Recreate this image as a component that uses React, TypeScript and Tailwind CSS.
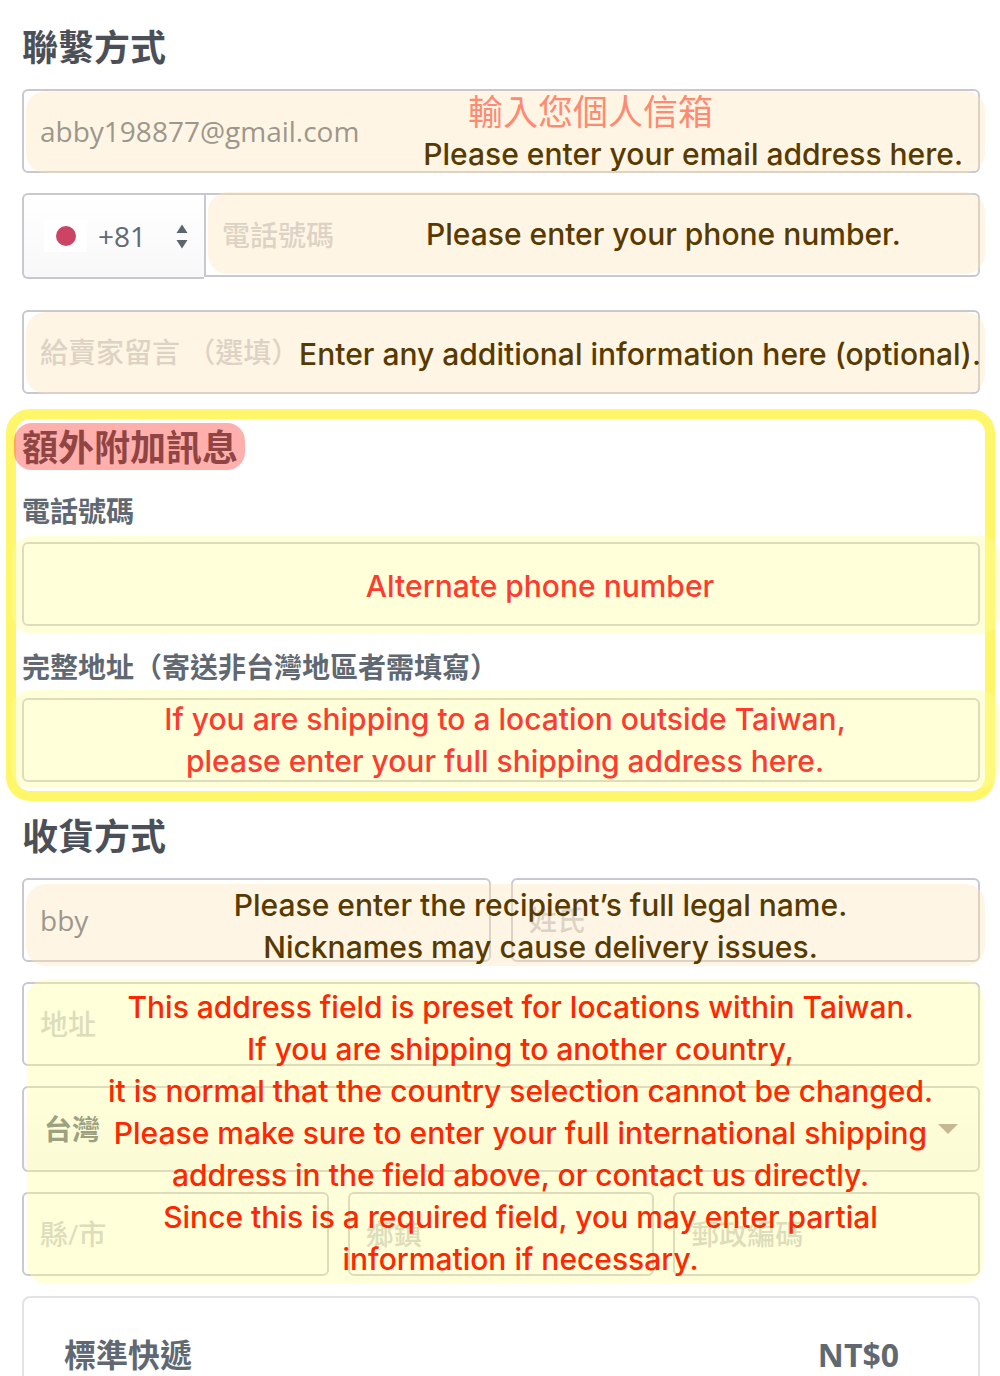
import type { InputHTMLAttributes, ReactNode } from "react";
import clsx from "clsx";

const fieldStyle =
  "block w-full h-[84px] rounded-md border-2 border-[#c8c8ce] bg-white px-4 text-[28px] text-[#606872] placeholder:font-medium placeholder:text-[#c8c8ce] placeholder:opacity-100 outline-none";

function Field({ className, ...props }: InputHTMLAttributes<HTMLInputElement>) {
  return <input className={clsx(fieldStyle, className)} {...props} />;
}

// Translucent marker laid over one or more form fields
function Note({
  tone,
  className,
  children,
}: {
  tone: "orange" | "yellow";
  className: string;
  children: ReactNode;
}) {
  return (
    <div
      className={clsx(
        "pointer-events-none absolute z-10 flex flex-col justify-center rounded-[20px] pt-[2px] font-['Inter','Noto_Sans_CJK_TC',sans-serif] text-[30px] leading-[42px] font-medium whitespace-nowrap",
        tone === "orange"
          ? "bg-[rgba(255,229,184,0.38)] text-[#573a00]"
          : "bg-[rgba(255,255,158,0.38)] text-[#ff3b30]",
        className
      )}
    >
      {children}
    </div>
  );
}

export default function App() {
  return (
    <main className="bg-white pl-[22px] pr-5 pt-[21px] font-['Open_Sans','Noto_Sans_CJK_TC',sans-serif] text-[#606872]">
      {/* Contact */}
      <section>
        <h2 className="mb-[14px] text-[36px] leading-[54px] font-bold text-[#4b5058]">
          聯繫方式
        </h2>
        <div className="relative">
          <Field type="email" aria-label="Email" defaultValue="abby198877@gmail.com" />
          <Note tone="orange" className="top-[2px] bottom-0 left-1 -right-[5px] pr-[22px]">
            <p className="pr-[250px] text-right text-[35px] font-normal text-[#ff8a72]">
              輸入您個人信箱
            </p>
            <p className="text-right">Please enter your email address here.</p>
          </Note>
        </div>

        <div className="mt-5 flex items-start">
          <div className="relative w-[182px] shrink-0">
            <select
              aria-label="Country code"
              className="block h-[86px] w-full appearance-none rounded-l-md border-2 border-r-0 border-[#c8c8ce] bg-linear-to-b from-white to-[#f8f8f8] pl-[74px] text-[28px] outline-none"
            >
              <option>+81</option>
            </select>
            <svg
              className="pointer-events-none absolute top-[27px] left-[22px]"
              width="43"
              height="32"
              viewBox="0 0 43 32"
            >
              <rect width="43" height="32" fill="#fff" />
              <circle cx="22" cy="16" r="10" fill="#cc4463" />
            </svg>
            <svg
              className="pointer-events-none absolute top-[31px] right-4"
              width="12"
              height="25"
              viewBox="0 0 12 25"
              fill="#5b6570"
            >
              <path d="M6 0.5 11.5 9H0.5z" />
              <path d="M6 24.5 11.5 16H0.5z" />
            </svg>
          </div>
          <div className="relative flex-1">
            <Field
              type="tel"
              aria-label="電話號碼"
              placeholder="電話號碼"
              className="rounded-l-none"
            />
            <Note tone="orange" className="-top-px bottom-[3px] left-1 -right-[5px] pl-[218px]">
              <p>Please enter your phone number.</p>
            </Note>
          </div>
        </div>

        <div className="relative mt-[31px]">
          <Field
            type="text"
            aria-label="給賣家留言"
            placeholder="給賣家留言 （選填）"
          />
          <Note tone="orange" className="top-[2px] bottom-0 left-1 -right-[5px] pr-1">
            <p className="text-right">
              Enter any additional information here (optional).
            </p>
          </Note>
        </div>
      </section>

      {/* Extra info */}
      <section className="mt-[15px] -ml-4 -mr-[15px] rounded-[24px] border-[10px] border-[#fff66a] pt-1 pr-[5px] pb-[9px] pl-[6px]">
        <h2 className="relative -ml-2 w-fit pt-[2px] pr-[7px] pl-2 text-[36px] leading-[45px] font-bold text-[#4b5058]">
          額外附加訊息
          <span className="absolute inset-0 rounded-[18px] bg-[rgba(255,52,42,0.39)]" />
        </h2>
        <label
          htmlFor="alt-phone"
          className="mt-5 mb-[10px] block text-[28px] leading-[42px] font-bold"
        >
          電話號碼
        </label>
        <div className="relative">
          <Field id="alt-phone" type="tel" />
          <Note tone="yellow" className="-top-[6px] -bottom-2 -left-[10px] -right-5 pl-[68px]">
            <p className="text-center">Alternate phone number</p>
          </Note>
        </div>
        <label
          htmlFor="full-address"
          className="mt-5 mb-[10px] block text-[28px] leading-[42px] font-bold"
        >
          完整地址（寄送非台灣地區者需填寫）
        </label>
        <div className="relative">
          <Field id="full-address" type="text" />
          <Note tone="yellow" className="-top-2 -bottom-[6px] -left-[11px] -right-[19px]">
            <p className="text-center">
              If you are shipping to a location outside Taiwan,
              <br />
              please enter your full shipping address here.
            </p>
          </Note>
        </div>
      </section>

      {/* Delivery */}
      <section>
        <h2 className="mt-[9px] mb-[14px] text-[36px] leading-[54px] font-bold text-[#4b5058]">
          收貨方式
        </h2>
        <div className="relative grid grid-cols-2 gap-5">
          <Field type="text" aria-label="名字" defaultValue="bby" />
          <Field type="text" aria-label="姓氏" placeholder="姓氏" />
          <Note tone="orange" className="top-[6px] -bottom-1 left-1 -right-[5px] pl-[70px]">
            <p className="text-center">
              Please enter the recipient’s full legal name.
              <br />
              Nicknames may cause delivery issues.
            </p>
          </Note>
        </div>

        <div className="relative mt-5 flex flex-col gap-5">
          <Field type="text" aria-label="地址" placeholder="地址" />
          <div className="relative">
            <select
              aria-label="國家"
              className="block h-[86px] w-full appearance-none rounded-md border-2 border-[#c8c8ce] bg-linear-to-b from-white to-[#f8f8f8] px-5 text-[28px] font-bold outline-none"
            >
              <option>台灣</option>
            </select>
            <svg
              className="pointer-events-none absolute top-[38px] right-[22px]"
              width="20"
              height="10"
              viewBox="0 0 20 10"
              fill="#a28d8d"
            >
              <path d="M0 0h20L10 10z" />
            </svg>
          </div>
          <div className="grid grid-cols-3 gap-[19px]">
            <Field type="text" aria-label="縣/市" placeholder="縣/市" />
            <Field type="text" aria-label="鄉鎮" placeholder="鄉鎮" />
            <Field type="text" aria-label="郵政編碼" placeholder="郵政編碼" />
          </div>
          <Note
            tone="yellow"
            className="-top-[3px] -bottom-2 left-[5px] -right-[3px] pl-[31px] text-[#ff2600]"
          >
            <p className="text-center">
              This address field is preset for locations within Taiwan.
              <br />
              If you are shipping to another country,
              <br />
              it is normal that the country selection cannot be changed.
              <br />
              Please make sure to enter your full international shipping
              <br />
              address in the field above, or contact us directly.
              <br />
              Since this is a required field, you may enter partial
              <br />
              information if necessary.
            </p>
          </Note>
        </div>

        <div className="mt-5 flex items-center justify-between rounded-t-lg border-2 border-b-0 border-[#e2e2e8] pt-9 pr-[79px] pl-10 text-[32px] leading-[42px] font-bold">
          <span>標準快遞</span>
          <span>NT$0</span>
        </div>
      </section>
    </main>
  );
}
